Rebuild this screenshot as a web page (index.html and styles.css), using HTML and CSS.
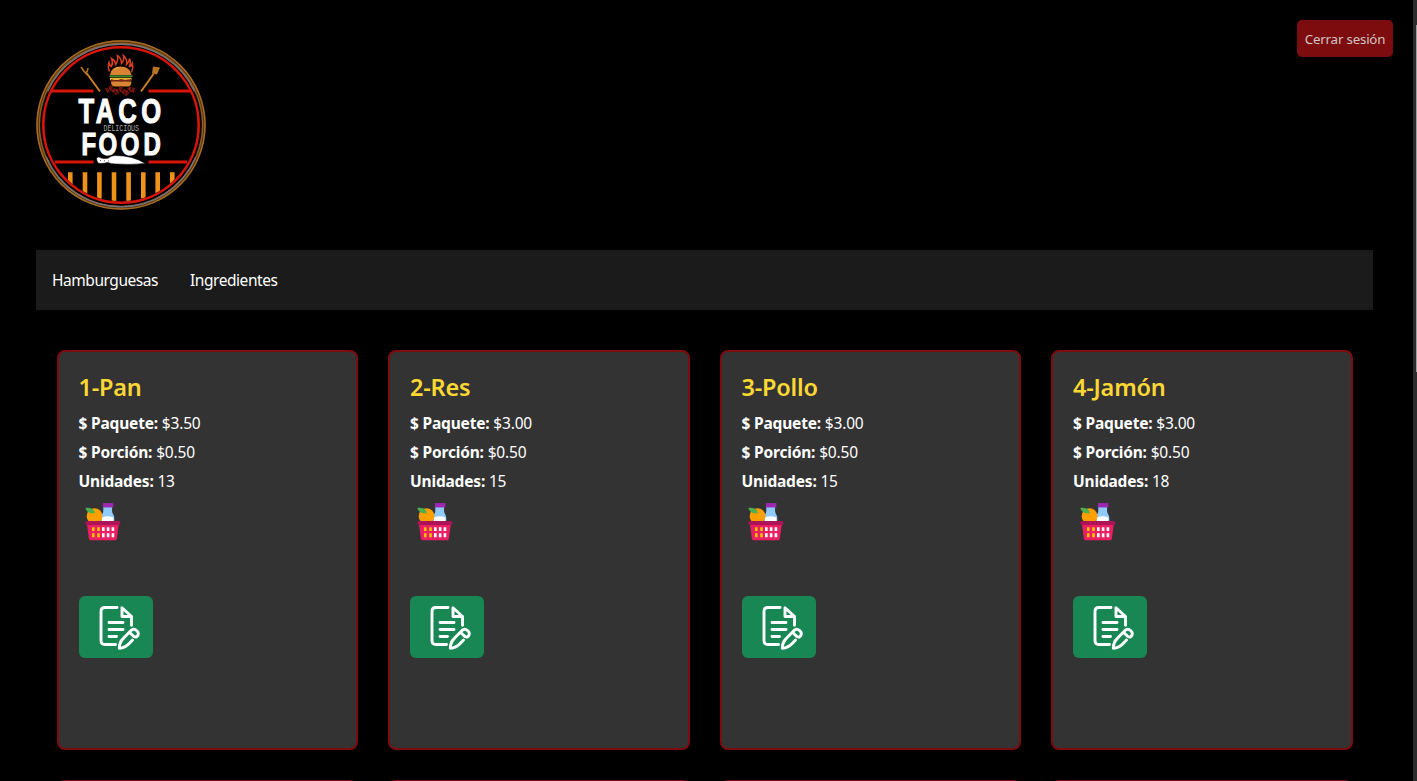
FILE: index.html
```
<!DOCTYPE html>
<html lang="es">
<head>
<meta charset="utf-8">
<title>Taco Food</title>
<link rel="stylesheet" href="styles.css">
</head>
<body>
<svg class="defs" width="0" height="0" aria-hidden="true">
  <symbol id="basket" viewBox="0 0 48 48">
    <path fill="#90caf9" d="M23 25v-5c0-3 2.500-4 2.500-8V8h10v4c0 4 2.500 5 2.500 8v5z"/>
    <path fill="#fff" d="M24 26v-6q6-3 13 0v6z"/>
    <path fill="#9c27b0" d="M25 3.500h12v5H25z"/>
    <circle cx="15.500" cy="18.500" r="9" fill="#ffa000"/>
    <path fill="#4caf50" d="M5 9c5-1 10 1 11 6-5 1-10-1-11-6z"/>
    <path fill="#e91e63" d="M39 46H11c-1 0-1.800-.7-2-1.700L6.500 25h37L41 44.300c-.2 1-1 1.700-2 1.700z"/>
    <rect x="5" y="24" width="40" height="4.500" rx="2" fill="#ad1457"/>
    <path fill="#ffc107" d="M12.500 31h3v4.500h-3zm6 0h3v4.500h-3zm-6 7h3v4.500h-3zm6 0h3v4.500h-3z"/>
    <path fill="#fff" d="M24 31h3v4.500h-3zm5.500 0h3v4.500h-3zm5.500 0h3v4.500h-3zm-11 7h3v4.500h-3zm5.500 0h3v4.500h-3zm5.500 0h3v4.500h-3z"/>
  </symbol>
  <symbol id="edit" viewBox="0 0 50 50">
    <g fill="none" stroke="#fff" stroke-width="2.900" stroke-linecap="round" stroke-linejoin="round">
      <path d="M25 4.500H13q-4 0-4 4v29q0 4 4 4h10.500"/>
      <path d="M30 4.800v8.700h9.500zM39.500 13.500v8.700"/>
      <path d="M17 19.500h14M17 26.500h14M17 33.500h7.500"/>
      <path d="M40.500 37l-3.300 3.400q-4.200 4.300-9.900 4.800-.2-5.700 4.300-10.100l7.500-7.700q2.700-2.500 5.700.3t.2 5.700q-1.300 1.300-3 .2l-3.800-3.600"/>
    </g>
  </symbol>
</svg>
<div class="page">
  <main class="content">
    <header class="header">
      <svg class="logo" viewBox="36 39.500 170 170" role="img">
        <g fill="none">
          <circle cx="121" cy="124.500" r="82.700" stroke="#4f3312" stroke-width="4"/>
          <circle cx="121" cy="124.500" r="84" stroke="#a76b22" stroke-width="1.500"/>
          <circle cx="121" cy="124.500" r="81.700" stroke="#96601f" stroke-width="1.200"/>
          <path d="M47.500 91a80.800 80.800 0 0 1 147 0M46.500 157a81 81 0 0 0 149 0" stroke="#77737a" stroke-width="1.400"/>
          <circle cx="121" cy="124.500" r="77.700" stroke="#d91409" stroke-width="2.600"/>
          <path d="M51 90.500h42.500M148.500 90.500H191M55 161.500h38.500M148.500 161.500H187" stroke="#d91409" stroke-width="2.800"/>
        </g>
        <clipPath id="disc"><circle cx="121" cy="124.500" r="76.300"/></clipPath>
        <path clip-path="url(#disc)" d="M70.300 171.700v40M85 171.700v40M99.400 171.700v40M114 171.700v40M128.600 171.700v40M143.300 171.700v40M157.700 171.700v40M172.300 171.700v40" stroke="#ee9219" stroke-width="4.600"/>
        <path fill="none" stroke="#d9401f" stroke-width="1.500" d="M109.500 71q-2-4-.5-9 1 4 2.500 4 2-4 0-8 4 2 4 6 3-4 2-9 4 3 4 8 3-3 2-8 4 4 3 9 3-3 3-6 2 4 0 8 2 0 3-3 1 5-1 9"/>
        <path fill="#d88432" d="M110 74.500q1-8.500 10.500-8.500T131.500 74.500z"/>
        <path fill="#f0ad5e" d="M113 70q3-4 8-3.500-4 1-8 3.500z"/>
        <path d="M109.500 75.700h23" stroke="#3b8934" stroke-width="1.800"/>
        <path d="M110 78.500h21.500" stroke="#e8b630" stroke-width="2.500"/>
        <path d="M111 79.500l5 2 5-2 4 1 6-1" stroke="#7c2315" stroke-width="2" fill="none"/>
        <path fill="#d88432" d="M111 81h20.500q0 5-4 5h-12.500q-4 0-4-5z"/>
        <path d="M106 90.500l5-3 5 4 5-3 5 4 4-4 6 2" fill="none" stroke="#64130e" stroke-width="5" stroke-dasharray="3 1"/>
        <path d="M109 88l5 3 5-2 5 4 6-5 3 3" fill="none" stroke="#b82318" stroke-width="1" stroke-dasharray="2 2"/>
        <path d="M86.500 72.500L100 91M153.500 73.500L141 91" stroke="#c98022" stroke-width="2"/>
        <path d="M81 66.500l3.500 5q3 1.500 3.500-4M85 72l2.500 2.500" fill="none" stroke="#bb7824" stroke-width="1.500"/>
        <path fill="#b87525" d="M153 66l7 1-3 7-5-1z"/>
        <g class="brand">
          <text transform="translate(78.500 122) scale(.73 1)" x="0 23.500 54.500 86" font-size="35">TACO</text>
          <text transform="translate(81.500 154.300) scale(.76 1)" x="0 22.500 51.500 81.500" font-size="31.500">FOOD</text>
        </g>
        <text class="tag" x="103.500" y="130" textLength="35.500" lengthAdjust="spacingAndGlyphs">DELICIOUS</text>
        <path fill="#fff" stroke="#000" stroke-width=".6" d="M96.500 157.500q2-2 5 0 3 1 7 0 2-2.500 7-2.500 17 0 30 8-15 1.500-30 .5-4 0-8-1.500-3 1-7 1-4 0-4-5.500z"/>
        <path d="M100 160l10 .5" stroke="#444" stroke-width=".8" stroke-dasharray="1 3"/>
      </svg>
      <button class="logout">Cerrar sesión</button>
    </header>
    <nav class="nav"><a>Hamburguesas</a><a>Ingredientes</a></nav>
    <section class="grid">
      <article class="card">
        <h2>1-Pan</h2>
        <p><b>$ Paquete:</b> $3.50</p><p><b>$ Porción:</b> $0.50</p><p><b>Unidades:</b> 13</p>
        <svg class="basket"><use href="#basket"/></svg>
        <button class="edit"><svg><use href="#edit"/></svg></button>
      </article>
      <article class="card">
        <h2>2-Res</h2>
        <p><b>$ Paquete:</b> $3.00</p><p><b>$ Porción:</b> $0.50</p><p><b>Unidades:</b> 15</p>
        <svg class="basket"><use href="#basket"/></svg>
        <button class="edit"><svg><use href="#edit"/></svg></button>
      </article>
      <article class="card">
        <h2>3-Pollo</h2>
        <p><b>$ Paquete:</b> $3.00</p><p><b>$ Porción:</b> $0.50</p><p><b>Unidades:</b> 15</p>
        <svg class="basket"><use href="#basket"/></svg>
        <button class="edit"><svg><use href="#edit"/></svg></button>
      </article>
      <article class="card">
        <h2>4-Jamón</h2>
        <p><b>$ Paquete:</b> $3.00</p><p><b>$ Porción:</b> $0.50</p><p><b>Unidades:</b> 18</p>
        <svg class="basket"><use href="#basket"/></svg>
        <button class="edit"><svg><use href="#edit"/></svg></button>
      </article>
      <article class="card"></article>
      <article class="card"></article>
      <article class="card"></article>
      <article class="card"></article>
    </section>
  </main>
  <div class="scrollbar"><div class="thumb"></div></div>
</div>
</body>
</html>
```
FILE: styles.css
```
* { box-sizing: border-box; }
body {
  margin: 0;
  background: #000;
  color: #fff;
  font-family: "Noto Sans", "Open Sans", sans-serif;
  font-size: 15.5px;
  overflow: hidden;
}
.defs { display: block; }
.page { display: flex; height: 781px; overflow: hidden; }
.content { flex: 1; padding: 20px 20px 0 36px; }
.header {
  display: flex;
  justify-content: space-between;
  align-items: flex-start;
  height: 230px;
}
.logo { width: 170px; height: 170px; margin-top: 19.5px; }
.brand {
  fill: #fff;
  stroke: #fff;
  stroke-width: 1.2px;
  font-family: "Liberation Sans", sans-serif;
  font-weight: 700;
}
.tag { font-family: "Liberation Mono", monospace; font-size: 9px; fill: #aaa; }
.logout {
  width: 96px;
  height: 37px;
  padding: 1px 0 0;
  border: 0;
  border-radius: 5px;
  background: #7d0c0e;
  color: #d0c4c4;
  font: 13.333px "Noto Sans", sans-serif;
  letter-spacing: -.2px;
  white-space: nowrap;
}
.nav {
  display: flex;
  align-items: center;
  gap: 32px;
  height: 60px;
  margin-right: 20px;
  padding: 0 16px;
  background: #1b1b1b;
}
.nav a { letter-spacing: -.45px; }
.grid {
  display: grid;
  grid-template-columns: repeat(4, 1fr);
  gap: 30px;
  padding: 40px 40.5px 0 20.5px;
}
.card {
  height: 400px;
  padding: 21px 20px 0;
  border: 2px solid #7d0c0e;
  border-radius: 8px;
  background: #333;
}
.card h2 {
  margin: 0 0 9px;
  color: #fdd835;
  font-size: 23.5px;
  font-weight: 600;
  line-height: 29px;
  letter-spacing: -.2px;
}
.card p { margin: 0 0 5px; line-height: 24px; letter-spacing: -.18px; }
.basket { display: block; width: 42px; height: 42px; margin: 7px 0 0 2.5px; }
.edit {
  display: flex;
  width: 74px;
  height: 62px;
  margin-top: 54px;
  padding: 7px 11px 5px 13px;
  border: 0;
  border-radius: 6px;
  background: #198754;
}
.edit svg { width: 50px; height: 50px; }
.scrollbar {
  display: flex;
  justify-content: flex-end;
  align-items: flex-start;
  width: 4px;
  background: #2c2c2c;
}
.thumb { width: 1px; height: 347px; margin-top: 25px; background: #9f9f9f; }
```
